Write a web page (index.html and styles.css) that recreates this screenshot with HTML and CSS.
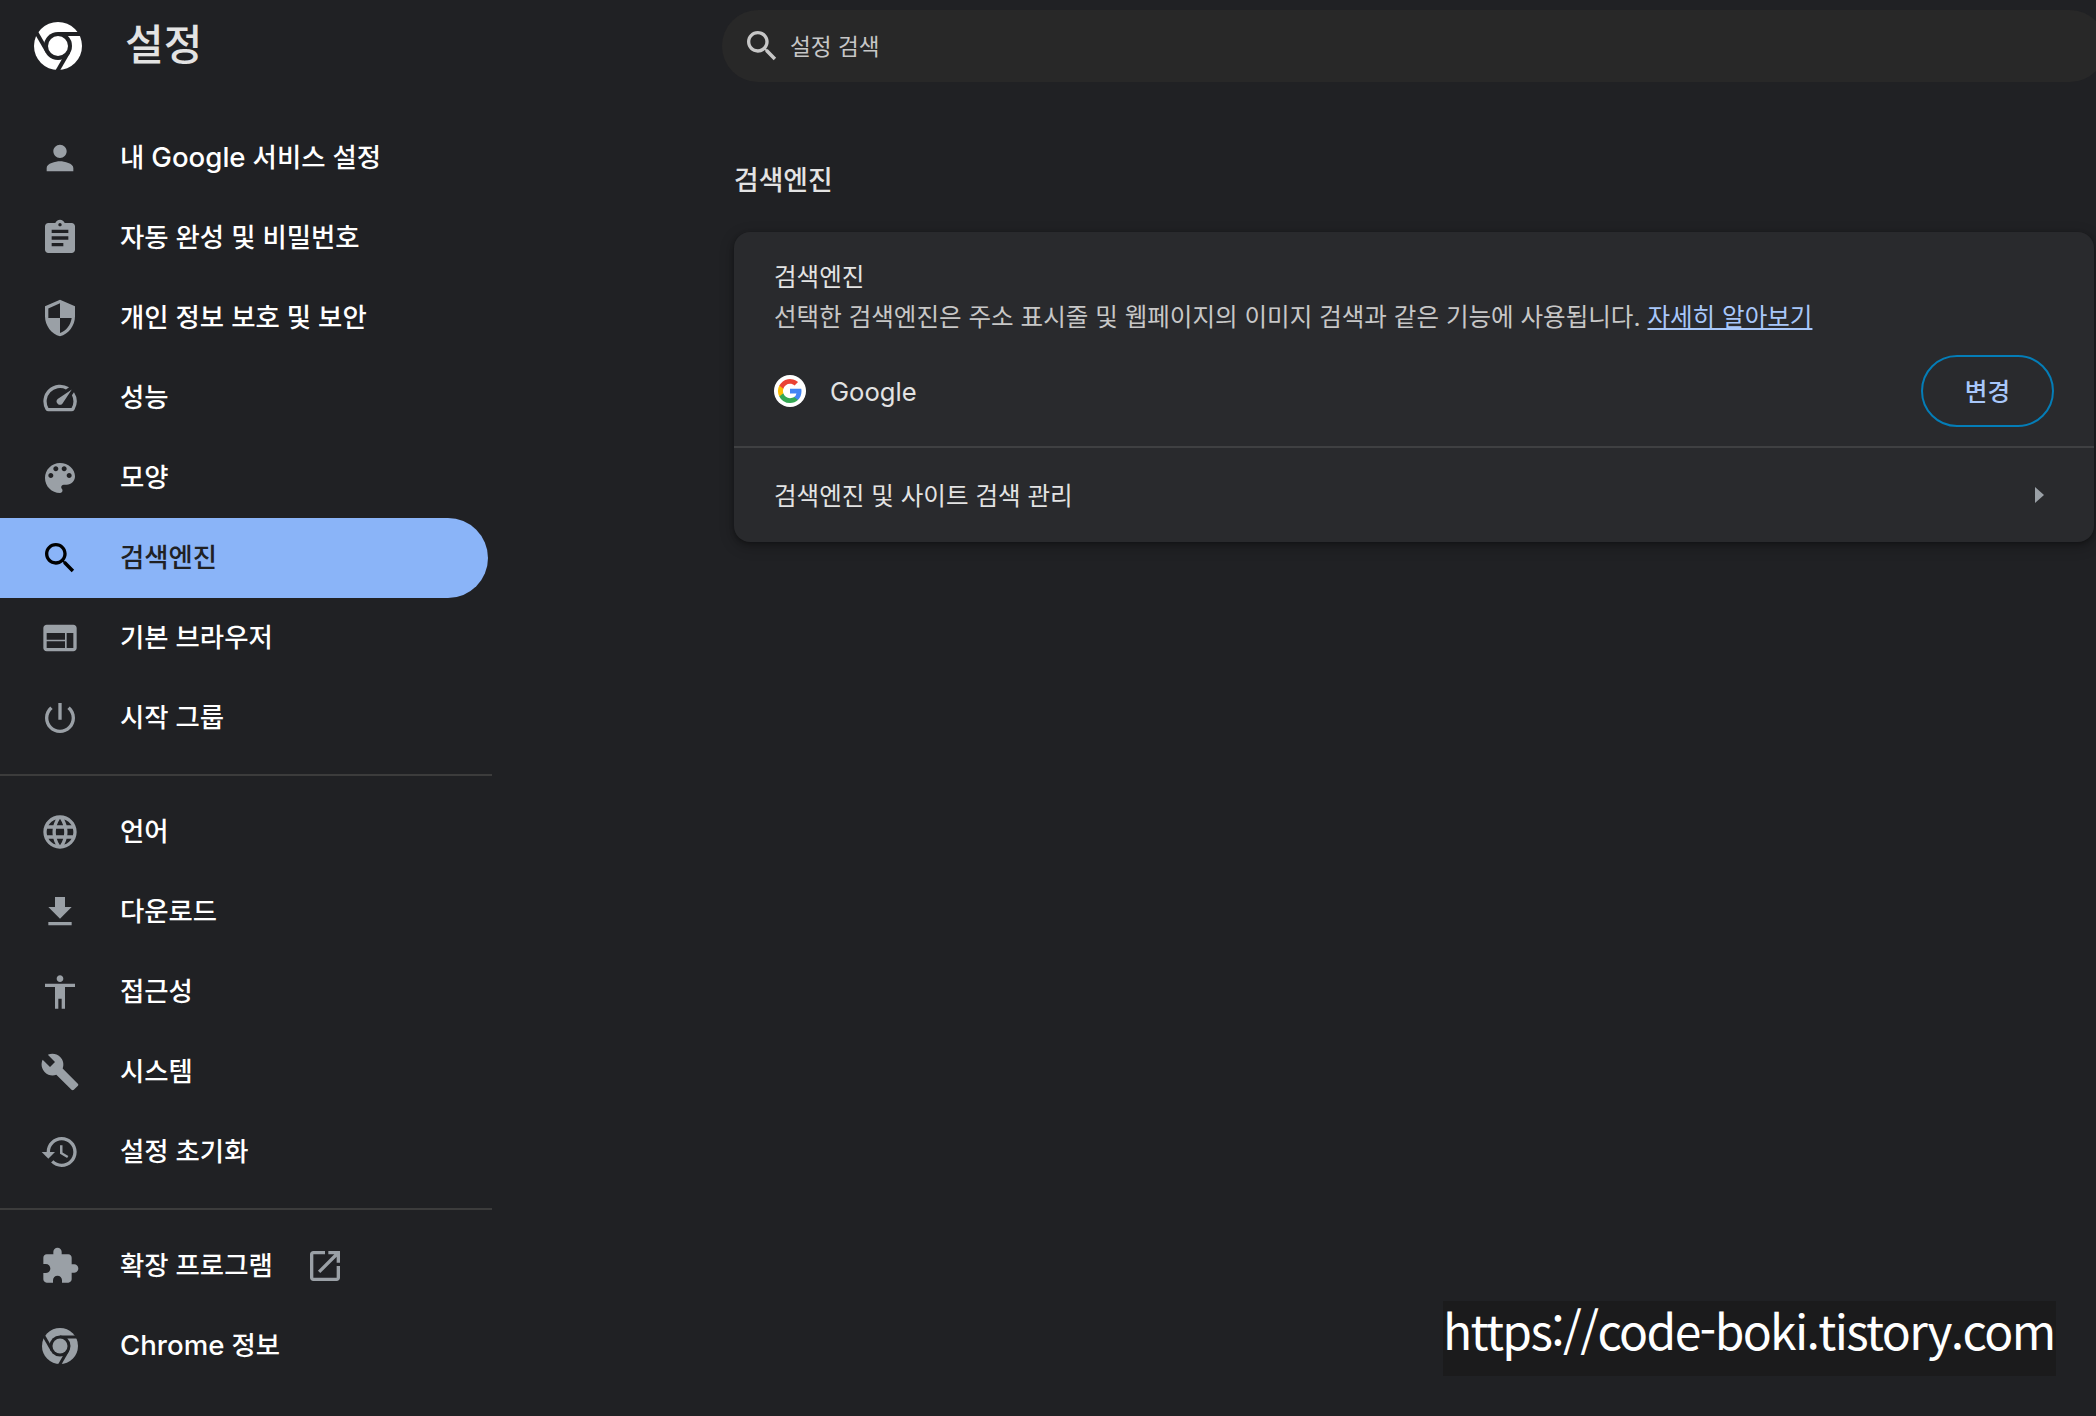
FILE: index.html
```html
<!DOCTYPE html>
<html lang="ko">
<head>
    <meta charset="UTF-8">
    <title>설정</title>
    <link rel="stylesheet" href="styles.css">
</head>
<body>
    <svg class="defs">
        <mask id="chrome-gaps">
            <rect width="48" height="48" fill="#fff"/>
            <circle cx="24" cy="24" r="14" fill="#000"/>
            <g stroke="#000" stroke-width="4">
                <path d="M24 12h24"/>
                <path d="M24 12h24" transform="rotate(120 24 24)"/>
                <path d="M24 12h24" transform="rotate(240 24 24)"/>
            </g>
        </mask>
        <symbol id="chrome" viewBox="0 0 48 48">
            <circle cx="24" cy="24" r="24" mask="url(#chrome-gaps)"/>
            <circle cx="24" cy="24" r="10"/>
        </symbol>
        <symbol id="search" viewBox="0 0 24 24">
            <path d="M15.5 14h-.79l-.28-.27C15.41 12.59 16 11.11 16 9.5 16 5.91 13.09 3 9.5 3S3 5.91 3 9.5 5.91 16 9.5 16c1.61 0 3.09-.59 4.23-1.57l.27.28v.79l5 4.99L20.49 19l-4.99-5zm-6 0C7.01 14 5 11.99 5 9.5S7.01 5 9.5 5 14 7.01 14 9.5 11.99 14 9.5 14z"/>
        </symbol>
    </svg>

    <div class="page">
        <div class="left">
            <div class="logo">
                <svg class="logo-icon"><use href="#chrome"/></svg>
                <h1>설정</h1>
            </div>
            <ul class="menu">
                <li>
                    <svg class="icon" viewBox="0 0 24 24"><path d="M12 12c2.21 0 4-1.79 4-4s-1.79-4-4-4-4 1.79-4 4 1.79 4 4 4zm0 2c-2.67 0-8 1.34-8 4v2h16v-2c0-2.66-5.33-4-8-4z"/></svg>
                    <span>내 <span class="en">Google</span> 서비스 설정</span>
                </li>
                <li>
                    <svg class="icon" viewBox="0 0 24 24"><path d="M19 3h-4.18C14.4 1.84 13.3 1 12 1c-1.3 0-2.4.84-2.82 2H5c-1.1 0-2 .9-2 2v14c0 1.1.9 2 2 2h14c1.1 0 2-.9 2-2V5c0-1.1-.9-2-2-2zm-7 0c.55 0 1 .45 1 1s-.45 1-1 1-1-.45-1-1 .45-1 1-1zm2 14H7v-2h7v2zm3-4H7v-2h10v2zm0-4H7V7h10v2z"/></svg>
                    <span>자동 완성 및 비밀번호</span>
                </li>
                <li>
                    <svg class="icon" viewBox="0 0 24 24"><path d="M12 1L3 5v6c0 5.55 3.84 10.74 9 12 5.16-1.26 9-6.45 9-12V5l-9-4zm0 10.99h7c-.53 4.12-3.28 7.79-7 8.94V12H5V6.3l7-3.11v8.8z"/></svg>
                    <span>개인 정보 보호 및 보안</span>
                </li>
                <li>
                    <svg class="icon" viewBox="0 0 24 24"><path d="M20.38 8.57l-1.23 1.85a8 8 0 0 1-.22 7.58H5.07A8 8 0 0 1 15.58 6.85l1.85-1.23A10 10 0 0 0 3.35 19a2 2 0 0 0 1.72 1h13.85a2 2 0 0 0 1.74-1 10 10 0 0 0-.27-10.44zm-9.79 6.84a2 2 0 0 0 2.83 0l5.66-8.49-8.49 5.66a2 2 0 0 0 0 2.83z"/></svg>
                    <span>성능</span>
                </li>
                <li>
                    <svg class="icon" viewBox="0 0 24 24"><path d="M12 3c-4.97 0-9 4.03-9 9s4.03 9 9 9c.83 0 1.5-.67 1.5-1.5 0-.39-.15-.74-.39-1.01-.23-.26-.38-.61-.38-.99 0-.83.67-1.5 1.5-1.5H16c2.76 0 5-2.24 5-5 0-4.42-4.03-8-9-8zm-5.5 9c-.83 0-1.5-.67-1.5-1.5S5.67 9 6.5 9 8 9.67 8 10.5 7.33 12 6.5 12zm3-4C8.67 8 8 7.33 8 6.5S8.67 5 9.5 5s1.5.67 1.5 1.5S10.33 8 9.5 8zm5 0c-.83 0-1.5-.67-1.5-1.5S13.67 5 14.5 5s1.5.67 1.5 1.5S15.33 8 14.5 8zm3 4c-.83 0-1.5-.67-1.5-1.5S16.67 9 17.5 9s1.5.67 1.5 1.5-.67 1.5-1.5 1.5z"/></svg>
                    <span>모양</span>
                </li>
                <li class="selected">
                    <svg class="icon"><use href="#search"/></svg>
                    <span>검색엔진</span>
                </li>
                <li>
                    <svg class="icon" viewBox="0 0 24 24"><path d="M20 4H4c-1.1 0-1.99.9-1.99 2L2 18c0 1.1.9 2 2 2h16c1.1 0 2-.9 2-2V6c0-1.1-.9-2-2-2zm-5 14H4v-4h11v4zm0-5H4V9h11v4zm5 5h-4V9h4v9z"/></svg>
                    <span>기본 브라우저</span>
                </li>
                <li>
                    <svg class="icon" viewBox="0 0 24 24"><path d="M13 3h-2v10h2V3zm4.83 2.17l-1.42 1.42C17.99 7.86 19 9.81 19 12c0 3.87-3.13 7-7 7s-7-3.13-7-7c0-2.19 1.01-4.14 2.58-5.42L6.17 5.17C4.23 6.82 3 9.26 3 12c0 4.97 4.03 9 9 9s9-4.03 9-9c0-2.74-1.23-5.18-3.17-6.83z"/></svg>
                    <span>시작 그룹</span>
                </li>
            </ul>
            <ul class="menu">
                <li>
                    <svg class="icon" viewBox="0 0 24 24"><path d="M11.99 2C6.47 2 2 6.48 2 12s4.47 10 9.99 10C17.52 22 22 17.52 22 12S17.52 2 11.99 2zm6.93 6h-2.95c-.32-1.25-.78-2.45-1.38-3.56 1.84.63 3.37 1.91 4.33 3.56zM12 4.04c.83 1.2 1.48 2.53 1.91 3.96h-3.82c.43-1.43 1.08-2.76 1.91-3.96zM4.26 14C4.1 13.36 4 12.69 4 12s.1-1.36.26-2h3.38c-.08.66-.14 1.32-.14 2 0 .68.06 1.34.14 2H4.26zm.82 2h2.95c.32 1.25.78 2.45 1.38 3.56-1.84-.63-3.37-1.9-4.33-3.56zm2.95-8H5.08c.96-1.66 2.49-2.93 4.33-3.56C8.81 5.55 8.35 6.75 8.03 8zM12 19.96c-.83-1.2-1.48-2.53-1.91-3.96h3.82c-.43 1.43-1.08 2.76-1.91 3.96zM14.34 14H9.66c-.09-.66-.16-1.32-.16-2 0-.68.07-1.35.16-2h4.68c.09.65.16 1.32.16 2 0 .68-.07 1.34-.16 2zm.25 5.56c.6-1.11 1.06-2.31 1.38-3.56h2.95c-.96 1.65-2.49 2.93-4.33 3.56zM16.36 14c.08-.66.14-1.32.14-2 0-.68-.06-1.34-.14-2h3.38c.16.64.26 1.31.26 2s-.1 1.36-.26 2h-3.38z"/></svg>
                    <span>언어</span>
                </li>
                <li>
                    <svg class="icon" viewBox="0 0 24 24"><path d="M19 9h-4V3H9v6H5l7 7 7-7zM5 18v2h14v-2H5z"/></svg>
                    <span>다운로드</span>
                </li>
                <li>
                    <svg class="icon" viewBox="0 0 24 24"><path d="M12 2c1.1 0 2 .9 2 2s-.9 2-2 2-2-.9-2-2 .9-2 2-2zm9 7h-6v13h-2v-6h-2v6H9V9H3V7h18v2z"/></svg>
                    <span>접근성</span>
                </li>
                <li>
                    <svg class="icon" viewBox="0 0 24 24"><path d="M22.7 19l-9.1-9.1c.9-2.3.4-5-1.5-6.9-2-2-5-2.4-7.4-1.3L9 6 6 9 1.6 4.7C.4 7.1.9 10.1 2.9 12.1c1.9 1.9 4.6 2.4 6.9 1.5l9.1 9.1c.4.4 1 .4 1.4 0l2.3-2.3c.5-.4.5-1.1.1-1.4z"/></svg>
                    <span>시스템</span>
                </li>
                <li>
                    <svg class="icon" viewBox="0 0 24 24"><path d="M13 3c-4.97 0-9 4.03-9 9H1l3.89 3.89.07.14L9 12H6c0-3.87 3.13-7 7-7s7 3.13 7 7-3.13 7-7 7c-1.93 0-3.68-.79-4.94-2.06l-1.42 1.42C8.27 19.99 10.51 21 13 21c4.97 0 9-4.03 9-9s-4.03-9-9-9zm-1 5v5l4.28 2.54.72-1.21-3.5-2.08V8H12z"/></svg>
                    <span>설정 초기화</span>
                </li>
            </ul>
            <ul class="menu">
                <li>
                    <svg class="icon" viewBox="0 0 24 24"><path d="M20.5 11H19V7c0-1.1-.9-2-2-2h-4V3.5C13 2.12 11.88 1 10.5 1S8 2.12 8 3.5V5H4c-1.1 0-1.99.9-1.99 2v3.8H3.5c1.49 0 2.7 1.21 2.7 2.7s-1.21 2.7-2.7 2.7H2V20c0 1.1.9 2 2 2h3.8v-1.5c0-1.49 1.21-2.7 2.7-2.7 1.49 0 2.7 1.21 2.7 2.7V22H17c1.1 0 2-.9 2-2v-4h1.5c1.38 0 2.5-1.12 2.5-2.5S21.88 11 20.5 11z"/></svg>
                    <span>확장 프로그램</span>
                    <svg class="icon open" viewBox="0 0 24 24"><path d="M19 19H5V5h7V3H5c-1.11 0-2 .9-2 2v14c0 1.1.89 2 2 2h14c1.1 0 2-.9 2-2v-7h-2v7zM14 3v2h3.59l-9.83 9.83 1.41 1.41L19 6.41V10h2V3h-7z"/></svg>
                </li>
                <li>
                    <svg class="icon small"><use href="#chrome"/></svg>
                    <span><span class="en">Chrome</span> 정보</span>
                </li>
            </ul>
        </div>

        <div class="main">
            <div class="search">
                <svg class="icon"><use href="#search"/></svg>
                <span>설정 검색</span>
            </div>
            <h2>검색엔진</h2>
            <div class="card">
                <div class="engine">
                    <p>검색엔진</p>
                    <p class="desc">선택한 검색엔진은 주소 표시줄 및 웹페이지의 이미지 검색과 같은 기능에 사용됩니다. <a href="#">자세히 알아보기</a></p>
                    <div class="current">
                        <svg class="g-logo" viewBox="0 0 32 32">
                            <circle cx="16" cy="16" r="16" fill="#fff"/>
                            <g transform="translate(4 4)">
                                <path fill="#4285f4" d="M23.5 12.27c0-.85-.08-1.67-.22-2.45H12v4.64h6.45a5.52 5.52 0 0 1-2.39 3.62v3h3.87c2.27-2.09 3.57-5.16 3.57-8.81z"/>
                                <path fill="#34a853" d="M12 24c3.24 0 5.96-1.07 7.93-2.91l-3.87-3c-1.07.72-2.45 1.15-4.06 1.15-3.12 0-5.77-2.11-6.71-4.95h-4v3.1A12 12 0 0 0 12 24z"/>
                                <path fill="#fbbc05" d="M5.29 14.29a7.2 7.2 0 0 1 0-4.58v-3.1h-4a12 12 0 0 0 0 10.78l4-3.1z"/>
                                <path fill="#ea4335" d="M12 4.76c1.76 0 3.34.61 4.59 1.8l3.44-3.44A11.97 11.97 0 0 0 1.29 6.61l4 3.1C6.23 6.87 8.88 4.76 12 4.76z"/>
                            </g>
                        </svg>
                        <span class="en">Google</span>
                        <button>변경</button>
                    </div>
                </div>
                <div class="manage">
                    <span>검색엔진 및 사이트 검색 관리</span>
                    <i class="arrow"></i>
                </div>
            </div>
        </div>
    </div>
    <div class="watermark">https://code-boki.tistory.com</div>
</body>
</html>
```

FILE: styles.css
```css
* {
    margin: 0;
    padding: 0;
    box-sizing: border-box;
}
body {
    height: 1416px;
    overflow: hidden;
    background: #202124;
    color: #e3e3e3;
    font-family: Inter, "Noto Sans CJK KR", sans-serif;
    font-size: 24.55px;
}
ul {
    list-style: none;
}
.defs {
    position: absolute;
    width: 0;
    height: 0;
}
.page {
    display: flex;
}

/* left menu */
.left {
    width: 722px;
    flex-shrink: 0;
}
.logo {
    display: flex;
    align-items: center;
    height: 92px;
    padding-left: 34px;
}
.logo-icon {
    width: 48px;
    height: 48px;
    fill: #fff;
}
.logo h1 {
    margin-left: 43px;
    padding-bottom: 2px;
    font-size: 42px;
    font-weight: 500;
    line-height: 48px;
}
.menu {
    width: 492px;
    padding: 16px 0;
    border-bottom: 2px solid #3c3c3c;
    color: #fff;
    font-size: 26.4px;
    font-weight: 500;
}
.menu:nth-of-type(1) {
    padding-top: 26px;
}
.menu:last-child {
    border: none;
}
.menu li {
    display: flex;
    align-items: center;
    width: 488px;
    height: 80px;
    padding-left: 40px;
    line-height: 40px;
    white-space: nowrap;
}
.menu li > span {
    padding-bottom: 2px;
}
.menu .en {
    font-size: 27.6px;
    font-weight: 550;
}
.icon {
    width: 40px;
    height: 40px;
    margin-right: 40px;
    fill: #9aa0a6;
}
.icon.small {
    width: 36px;
    height: 36px;
    margin: 0 42px 0 2px;
}
.icon.open {
    margin: 0 0 0 32px;
}
.menu .selected {
    background: #8ab4f8;
    border-radius: 0 40px 40px 0;
    color: #202124;
}
.selected .icon {
    fill: #000;
}

/* right side */
.main {
    width: 1384px;
    flex-shrink: 0;
    padding-top: 10px;
}
.search {
    display: flex;
    align-items: center;
    height: 72px;
    padding-left: 20px;
    border-radius: 36px;
    background: #282828;
    color: #c7c7c7;
    font-size: 22.6px;
}
.search .icon {
    margin-right: 8px;
    fill: #c7c7c7;
}
.search span {
    padding-bottom: 2px;
}
h2 {
    height: 150px;
    padding: 78px 0 0 12px;
    font-size: 26.8px;
    font-weight: 500;
    line-height: 40px;
}
.card {
    width: 1360px;
    height: 310px;
    margin-left: 12px;
    border-radius: 16px;
    background: #292a2d;
    box-shadow: 0 2px 4px rgba(0, 0, 0, .3), 0 4px 12px 4px rgba(0, 0, 0, .15);
}
.engine {
    height: 216px;
    padding: 25px 40px 0;
    border-bottom: 2px solid #3f4042;
}
.engine p {
    line-height: 40px;
    white-space: nowrap;
}
.engine .desc {
    color: #c7c7c7;
}
.desc a {
    color: #a8c7fa;
    text-underline-offset: 2px;
    text-decoration-thickness: 2px;
    text-decoration-skip-ink: none;
}
.current {
    display: flex;
    align-items: center;
    height: 72px;
    margin-top: 18px;
}
.current .en {
    font-size: 25.6px;
}
.g-logo {
    width: 32px;
    height: 32px;
    margin-right: 24px;
}
.current button {
    width: 133px;
    height: 72px;
    padding-bottom: 2px;
    margin-left: auto;
    border: 2px solid #047db7;
    border-radius: 36px;
    background: none;
    color: #a8c7fa;
    font: 500 24.6px "Noto Sans CJK KR", sans-serif;
}
.manage {
    display: flex;
    align-items: center;
    justify-content: space-between;
    height: 94px;
    padding: 0 50px 0 40px;
}
.manage span {
    padding-bottom: 2px;
}
.arrow {
    border: 8px solid transparent;
    border-left: 9px solid #9aa0a6;
    border-right: none;
}

.watermark {
    position: absolute;
    left: 1443px;
    top: 1301px;
    width: 613px;
    height: 75px;
    background: #1b1b1c;
    color: #fff;
    font: 48px/56px "Noto Sans CJK KR", sans-serif;
    letter-spacing: -1.65px;
    white-space: nowrap;
}
```
